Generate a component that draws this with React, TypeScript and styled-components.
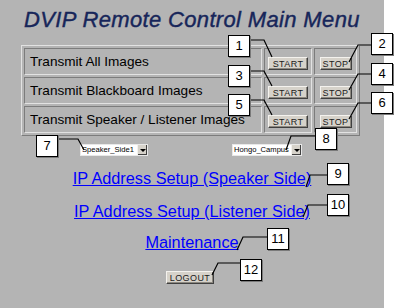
import React from "react";
import styled, { createGlobalStyle } from "styled-components";

const GlobalStyle = createGlobalStyle`
    html, body {
        margin: 0;
        padding: 0;
        background: #ffffff;
    }
    body {
        font-family: "Liberation Sans", Arial, sans-serif;
    }
`

const Page = styled.div`
    position: relative;
    width: 384px;
    height: 308px;
    background-color: #b4b4b4;
    overflow: visible;
`
const Title = styled.h1`
    margin: 0;
    padding: 7px 0 0 24px;
    height: 26px;
    font-size: 22px;
    line-height: 26px;
    font-style: italic;
    font-weight: normal;
    letter-spacing: 0.35px;
    color: #17265a;
    -webkit-text-stroke: 0.4px #17265a;
    white-space: nowrap;
`
const MenuTable = styled.table`
    margin: 12px 0 0 21px;
    width: 339px;
    border-collapse: separate;
    border-spacing: 2px;
    border: 1px solid;
    border-color: #e2e2e2 #7c7c7c #7c7c7c #e2e2e2;
`
const Cell = styled.td<{ $w?: number }>`
    height: 25px;
    padding: 0;
    width: ${(p) => (p.$w ? `${p.$w}px` : "auto")};
    border: 1px solid;
    border-color: #7c7c7c #e2e2e2 #e2e2e2 #7c7c7c;
    text-align: center;
    vertical-align: middle;
`
const Label = styled(Cell)`
    text-align: left;
    padding-left: 5px;
    font-size: 13.6px;
    color: #000000;
    white-space: nowrap;
`
const Btn = styled.button<{ $w: number }>`
    width: ${(p) => p.$w}px;
    height: 13px;
    padding: 0;
    font-family: "Liberation Sans", Arial, sans-serif;
    font-size: 9px;
    letter-spacing: 0.4px;
    color: #1a1a1a;
    background: #d6d2ca;
    border: 1px solid;
    border-color: #f4f2ee #404040 #404040 #f4f2ee;
    box-shadow: inset -1px -1px 0 #8c8880;
    line-height: 10px;
    cursor: pointer;
`
const SelectRow = styled.div`
    display: flex;
    align-items: flex-start;
    margin-top: 8px;
    padding-left: 80px;
    gap: 84px;
    height: 12px;
`
const Select = styled.div<{ $w: number }>`
    display: flex;
    width: ${(p) => p.$w}px;
    height: 12px;
    background: #ffffff;
    box-sizing: border-box;
    border: 1px solid #e8e8e8;
`
const SelectText = styled.span`
    flex: 1;
    min-width: 0;
    font-family: "Liberation Sans", Arial, sans-serif;
    font-size: 7.6px;
    line-height: 10px;
    color: #000000;
    white-space: nowrap;
    overflow: hidden;
    padding-left: 1px;
`
const Arrow = styled.span`
    flex: none;
    width: 9px;
    height: 10px;
    background: #d6d2ca;
    border-left: 1px solid #f4f2ee;
    box-shadow: inset -1px -1px 0 #404040;
    display: flex;
    align-items: center;
    justify-content: center;
    &::after {
        content: "";
        border-left: 3px solid transparent;
        border-right: 3px solid transparent;
        border-top: 3px solid #000;
    }
`
const Links = styled.div`
    display: flex;
    flex-direction: column;
    align-items: center;
`
const Link = styled.a<{ $mt: number }>`
    margin-top: ${(p) => p.$mt}px;
    font-size: 16.3px;
    line-height: 20px;
    color: #0000ff;
    text-decoration: underline;
    white-space: nowrap;
`
const Logout = styled(Btn)`
    margin-top: 19px;
    margin-left: -4px;
`

const Overlay = styled.svg`
    position: absolute;
    left: 0;
    top: 0;
    width: 400px;
    height: 308px;
    pointer-events: none;
`
const Callout = styled.div`
    position: absolute;
    width: 20px;
    height: 20px;
    background: #ffffff;
    border: 1px solid #000000;
    box-shadow: 1px 1px 0 #7a7a7a;
    font-size: 13px;
    line-height: 20px;
    text-align: center;
    color: #000000;
`

const callouts = [
    { n: 1, x: 228, y: 35, line: "250,40 264,40 272,57" },
    { n: 2, x: 371, y: 33, line: "371,45 358,45 349,62" },
    { n: 3, x: 228, y: 65, line: "250,71 264,71 272,86" },
    { n: 4, x: 371, y: 63, line: "371,74 358,74 349,90" },
    { n: 5, x: 228, y: 94, line: "250,100 264,100 272,115" },
    { n: 6, x: 371, y: 92, line: "371,103 358,103 349,119" },
    { n: 7, x: 36, y: 135, line: "58,139 78,139 84,150" },
    { n: 8, x: 315, y: 128, line: "315,136 291,136 286,150" },
    { n: 9, x: 327, y: 163, line: "327,175 310,175 306,187" },
    { n: 10, x: 327, y: 194, line: "327,205 308,205 303,217" },
    { n: 11, x: 267, y: 228, line: "267,237 243,237 237,250" },
    { n: 12, x: 240, y: 259, line: "240,263 218,263 212,275" },
];

const rows = [
    "Transmit All Images",
    "Transmit Blackboard Images",
    "Transmit Speaker / Listener Images",
];

export default function App() {
    return (
        <>
            <GlobalStyle />
            <Page>
                <Title>DVIP Remote Control Main Menu</Title>
                <MenuTable>
                    <tbody>
                        {rows.map((r) => (
                            <tr key={r}>
                                <Label>{r}</Label>
                                <Cell $w={46}><Btn $w={40}>START</Btn></Cell>
                                <Cell $w={41}><Btn $w={32}>STOP</Btn></Cell>
                            </tr>
                        ))}
                    </tbody>
                </MenuTable>
                <SelectRow>
                    <Select $w={68}><SelectText>Speaker_Side1</SelectText><Arrow /></Select>
                    <Select $w={70}><SelectText>Hongo_Campus</SelectText><Arrow /></Select>
                </SelectRow>
                <Links>
                    <Link href="#" $mt={12}>IP Address Setup (Speaker Side)</Link>
                    <Link href="#" $mt={13}>IP Address Setup (Listener Side)</Link>
                    <Link href="#" $mt={11}>Maintenance</Link>
                    <Logout $w={48}>LOGOUT</Logout>
                </Links>
                <Overlay>
                    {callouts.map((c) => (
                        <polyline key={c.n} points={c.line} fill="none" stroke="#000" strokeWidth={1.2} />
                    ))}
                </Overlay>
                {callouts.map((c) => (
                    <Callout key={c.n} style={{ left: c.x, top: c.y }}>{c.n}</Callout>
                ))}
            </Page>
        </>
    );
}
